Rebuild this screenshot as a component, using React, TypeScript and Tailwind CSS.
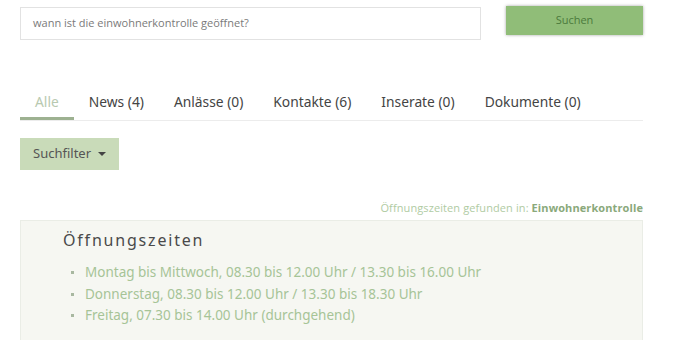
import React from 'react';

const tabs = [
  { label: 'Alle', active: true },
  { label: 'News (4)' },
  { label: 'Anlässe (0)' },
  { label: 'Kontakte (6)' },
  { label: 'Inserate (0)' },
  { label: 'Dokumente (0)' },
];

const hours = [
  'Montag bis Mittwoch, 08.30 bis 12.00 Uhr / 13.30 bis 16.00 Uhr',
  'Donnerstag, 08.30 bis 12.00 Uhr / 13.30 bis 18.30 Uhr',
  'Freitag, 07.30 bis 14.00 Uhr (durchgehend)',
];

const App: React.FC = () => {
  return (
    <div className="w-[680px] h-[340px] overflow-hidden bg-white pl-5 pr-[37px] font-['Noto_Sans',sans-serif]">
      <div className="flex items-start pt-[6px]">
        <div className="mt-px h-[33px] w-[461px] border border-[#e2e2e2] flex items-center pl-3 font-['Open_Sans',sans-serif] text-[11px] text-[#7a7a7a]">
          wann ist die einwohnerkontrolle geöffnet?
        </div>
        <button className="ml-[25px] h-[29px] w-[137px] bg-[#90bd78] shadow-[0_0_3px_rgba(0,0,0,0.35)] font-['Open_Sans',sans-serif] text-[11px] text-[#4b7a3c]">
          Suchen
        </button>
      </div>

      <div className="mt-[45px] flex border-b border-[#ececec] h-[36px]">
        {tabs.map((t) => (
          <div
            key={t.label}
            className={`px-[15px] h-full flex items-center text-[13.8px] ${
              t.active ? 'text-[#b8c9b0] border-b-[3px] border-[#9db191] pt-[3px]' : 'text-[#444]'
            }`}
          >
            {t.label}
          </div>
        ))}
      </div>

      <button className="mt-[17px] h-[32px] w-[99px] bg-[#c9dbb9] flex items-center pl-[13px] text-[13px] text-[#555]">
        Suchfilter
        <span className="ml-[7px] inline-block w-0 h-0 border-l-[4px] border-r-[4px] border-t-[4px] border-l-transparent border-r-transparent border-t-[#444]" />
      </button>

      <div className="mt-[31px] text-right text-[11px] font-['Open_Sans',sans-serif] text-[#b0cba3] leading-[14px] tracking-[0.1px]">
        Öffnungszeiten gefunden in: <span className="font-bold text-[#8aa97b]">Einwohnerkontrolle</span>
      </div>

      <div className="mt-[5px] h-[140px] bg-[#f6f7f2] border border-[#eaede6] pl-[42px] pt-[7px]">
        <div className="text-[16px] tracking-[1.8px] text-[#4a4a4a] leading-[24px]">Öffnungszeiten</div>
        <ul className="mt-[10px] pl-[8px]">
          {hours.map((h) => (
            <li key={h} className="flex items-center text-[13.5px] leading-[21.5px] text-[#a6c497]">
              <span className="w-[3px] h-[3px] bg-[#a8b8a0] mr-[11px]" />
              {h}
            </li>
          ))}
        </ul>
      </div>
    </div>
  );
};

export default App;
